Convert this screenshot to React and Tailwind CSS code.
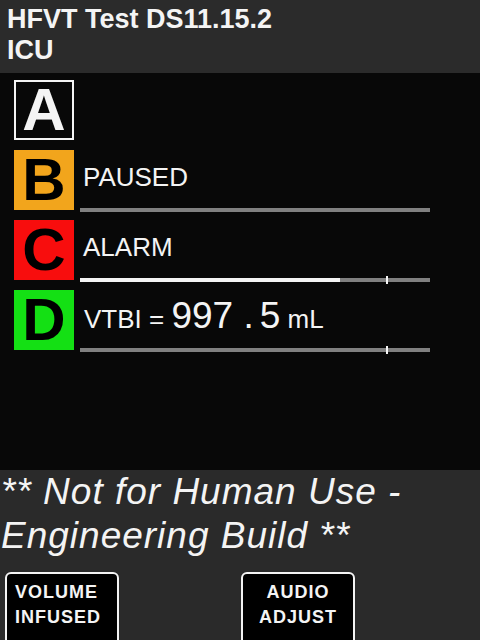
import React from "react";

const rows = [
  { letter: "A", box: "bg-[#080808] border-2 border-[#f4f4f4] text-[#f4f4f4]" },
  { letter: "B", box: "bg-[#f2a51c] text-black", label: "PAUSED", bar: "plain" },
  { letter: "C", box: "bg-[#f80d0d] text-black", label: "ALARM", bar: "fill" },
  { letter: "D", box: "bg-[#14e014] text-black", vtbi: true, bar: "tick" },
];

const Bar = ({ kind }) => (
  <div className="relative h-[4px] w-[350px] shrink-0 bg-[#808080] mb-[-2px]">
    {kind === "fill" && <div className="h-full w-[260px] bg-[#f4f4f4]" />}
    {kind !== "plain" && (
      <div className="absolute left-[306px] top-[-2px] h-[8px] w-[2px] bg-[#f4f4f4]" />
    )}
  </div>
);

const App = () => {
  return (
    <div
      className="w-[480px] h-[640px] overflow-hidden flex flex-col bg-[#080808] text-[#f4f4f4]"
      style={{ fontFamily: '"Liberation Sans", Arial, sans-serif' }}
    >
      {/* title bar */}
      <div className="h-[73px] shrink-0 bg-[#2b2b2b] pl-[7px] pt-[4px] text-[27px] leading-[31px] font-bold">
        <div>HFVT Test DS11.15.2</div>
        <div>ICU</div>
      </div>

      {/* channel rows */}
      <div className="h-[397px] shrink-0 pl-[14px] pt-[7px] flex flex-col gap-[10px]">
        {rows.map((row) => (
          <div key={row.letter} className="flex h-[60px]">
            <div
              className={`w-[60px] h-[60px] shrink-0 flex items-center justify-center text-[60px] leading-[60px] font-bold ${row.box}`}
            >
              {row.letter}
            </div>
            {row.bar && (
              <div className="ml-[6px] h-[60px] flex flex-col">
                {row.vtbi ? (
                  <div className="h-[58px] shrink-0 pl-[4px] pt-[7px] flex items-baseline">
                    <span className="text-[26px] leading-none">VTBI =&nbsp;</span>
                    <span className="text-[37px] leading-none">997 .</span>
                    <span className="text-[37px] leading-none ml-[6px]">5</span>
                    <span className="text-[26px] leading-none">&nbsp;mL</span>
                  </div>
                ) : (
                  <div className="h-[58px] shrink-0 pl-[3px] pt-[14px] text-[26px] leading-[26px]">
                    {row.label}
                  </div>
                )}
                <Bar kind={row.bar} />
              </div>
            )}
          </div>
        ))}
      </div>

      {/* footer */}
      <div className="flex-1 bg-[#2a2a2a]">
        <div className="pl-[1px] text-[37px] leading-[44px] italic tracking-[1px]">
          <div>** Not for Human Use -</div>
          <div>Engineering Build **</div>
        </div>
        <div className="mt-[14px] pl-[5px] flex gap-[122px]">
          <button className="w-[114px] h-[80px] bg-black border-2 border-[#f4f4f4] rounded-[6px] pl-[8px] pt-[6px] flex flex-col items-start justify-start text-[18px] leading-[25px] font-bold tracking-[1px] text-[#f4f4f4]">
            <span>VOLUME</span>
            <span>INFUSED</span>
          </button>
          <button className="w-[114px] h-[80px] bg-black border-2 border-[#f4f4f4] rounded-[6px] pt-[6px] flex flex-col items-center justify-start text-[18px] leading-[25px] font-bold tracking-[1px] text-[#f4f4f4]">
            <span>AUDIO</span>
            <span>ADJUST</span>
          </button>
        </div>
      </div>
    </div>
  );
};

export default App;
